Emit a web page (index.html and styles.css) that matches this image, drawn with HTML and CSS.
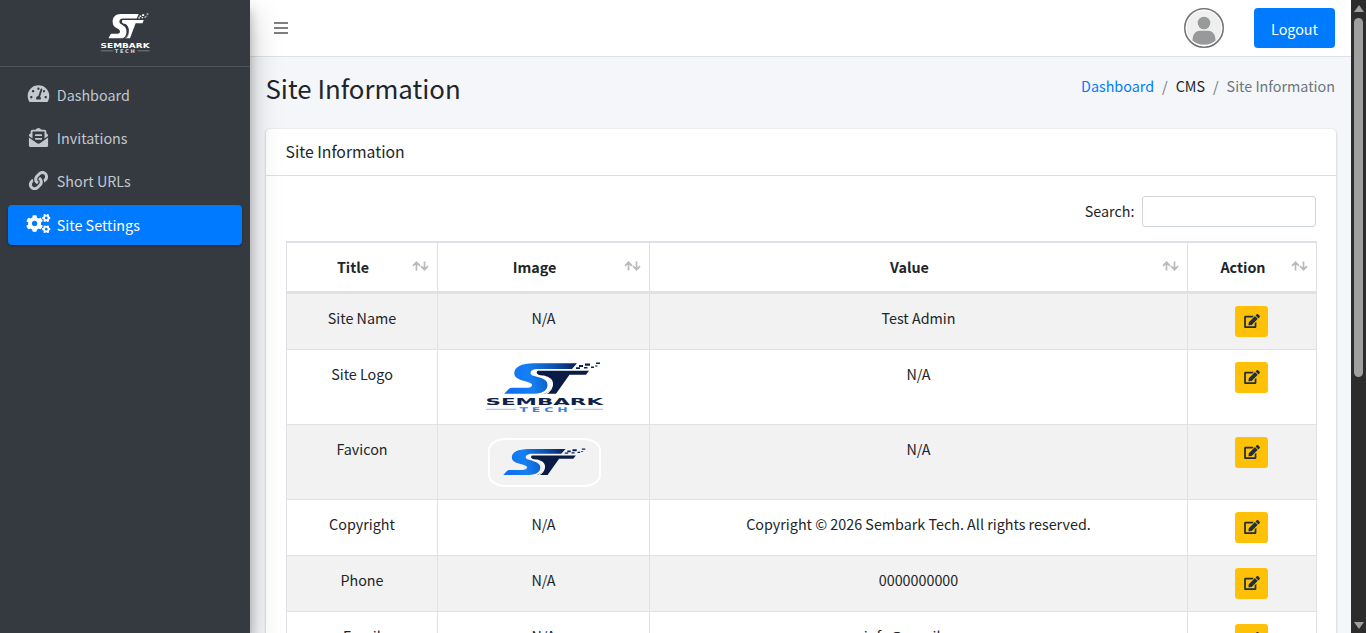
FILE: index.html
```html
<!DOCTYPE html>
<html lang="en">
<head>
    <meta charset="UTF-8">
    <meta name="viewport" content="width=device-width, initial-scale=1.0">
    <title>Site Information</title>
    <link rel="stylesheet" href="styles.css">
</head>
<body>
<svg class="sprite" aria-hidden="true">
    <defs>
        <linearGradient id="blue" gradientUnits="userSpaceOnUse" x1="25" y1="20" x2="92" y2="4">
            <stop offset="0" stop-color="#0f6ff0"/>
            <stop offset="0.3" stop-color="#1580f5"/>
            <stop offset="0.7" stop-color="#0b4fb0"/>
            <stop offset="1" stop-color="#0a1f55"/>
        </linearGradient>
    </defs>
    <symbol id="mark" viewBox="20 0 98 33" preserveAspectRatio="none">
        <path class="mark-s" d="M93 1.300H50C37 1.300 30.300 5.500 30.300 11c0 4.500 4 6.300 9.200 7.700 5 1.400 8.500 2.300 8.500 4.300 0 2-2.500 2.800-6 2.800H28c-2 0-3 .8-4 2L20.300 31.700H50c9 0 13.500-3.500 13.500-8.700 0-4-3-6-8-7.500-5-1.500-9-2-9-4.500 0-2.700 3.500-4.100 7.500-4.100H88z"/>
        <path class="mark-t" d="M54 8.700h51l-3 4H85.500L72 31.700H60c6-2.200 9-6 9-10 0-4.500-3.500-6.500-9-8.200h-4c-3-1.200-4.500-3.300-2-4.800z"/>
        <path class="mark-gap" d="M50 10c1 5.500 18 3.500 18 13 0 4-2.500 7-6.500 9"/>
        <path class="mark-s" d="M95 3h4v2h-4zM92 5.300h4v1.600h-4zM101 1.500h5v2.200h-5zM100 5h3.500v1.600H100zM107 4.500h3v1.500h-3zM112 .500h4v1.500h-4zM111 3.500h2.500v1H111z"/>
    </symbol>
    <symbol id="logo" viewBox="0 0 120 50" preserveAspectRatio="none">
        <use href="#mark" x="20" y="0" width="98" height="33"/>
        <text class="logo-name" x="1.500" y="43.200" textLength="117.500" lengthAdjust="spacingAndGlyphs">SEMBARK</text>
        <text class="logo-sub" x="35.500" y="49.600" textLength="52" lengthAdjust="spacingAndGlyphs">TECH</text>
        <path class="logo-line" d="M2 47.300h30M90 47.300h29"/>
    </symbol>
    <symbol id="i-dashboard" viewBox="0 0 576 512">
        <path d="M288 32C128.940 32 0 160.940 0 320c0 52.800 14.250 102.260 39.060 144.800 5.610 9.620 16.300 15.200 27.440 15.200h443c11.140 0 21.830-5.580 27.440-15.200C561.750 422.260 576 372.800 576 320c0-159.060-128.940-288-288-288zm0 64c14.710 0 26.580 10.130 30.320 23.650-1.110 2.260-2.640 4.230-3.450 6.670l-9.220 27.670c-5.130 3.490-10.970 6.010-17.640 6.010-17.670 0-32-14.330-32-32S270.330 96 288 96zM96 384c-17.670 0-32-14.330-32-32s14.330-32 32-32 32 14.330 32 32-14.330 32-32 32zm48-160c-17.670 0-32-14.330-32-32s14.330-32 32-32 32 14.330 32 32-14.330 32-32 32zm246.770-72.410l-61.330 184C343.130 347.330 352 364.540 352 384c0 11.720-3.380 22.550-8.880 32H232.880c-5.500-9.450-8.880-20.280-8.880-32 0-33.940 26.500-61.430 59.900-63.590l61.340-184.010c4.170-12.560 17.730-19.450 30.360-15.170 12.570 4.190 19.350 17.790 15.170 30.360zm14.660 57.200l15.520-46.550c3.470-1.290 7.130-2.230 11.050-2.230 17.670 0 32 14.330 32 32s-14.330 32-32 32c-11.380-.010-20.890-6.280-26.570-15.220zM480 384c-17.670 0-32-14.330-32-32s14.330-32 32-32 32 14.330 32 32-14.330 32-32 32z"/>
    </symbol>
    <symbol id="i-invite" viewBox="0 0 512 512">
        <path d="M176 216h160c8.840 0 16-7.160 16-16v-16c0-8.840-7.160-16-16-16H176c-8.840 0-16 7.160-16 16v16c0 8.840 7.160 16 16 16zm-16 80c0 8.840 7.160 16 16 16h160c8.840 0 16-7.160 16-16v-16c0-8.840-7.160-16-16-16H176c-8.840 0-16 7.160-16 16v16zm96 121.130c-16.420 0-32.840-5.060-46.860-15.190L0 250.860V464c0 26.510 21.490 48 48 48h416c26.510 0 48-21.490 48-48V250.860L302.860 401.940c-14.020 10.120-30.440 15.190-46.860 15.190zm237.610-254.180c-8.850-6.940-17.240-13.470-29.610-22.810V96c0-26.510-21.490-48-48-48h-77.550c-3.040-2.200-5.870-4.260-9.040-6.560C312.600 29.170 279.200-.350 256 0c-23.200-.350-56.590 29.170-73.410 41.440-3.170 2.300-6 4.360-9.040 6.560H96c-26.510 0-48 21.490-48 48v44.140c-12.370 9.330-20.760 15.870-29.610 22.810A47.995 47.995 0 0 0 0 200.720v10.650l96 69.350V96h320v184.720l96-69.350v-10.650c0-14.740-6.780-28.670-18.390-37.770z"/>
    </symbol>
    <symbol id="i-link" viewBox="0 0 512 512">
        <path d="M326.612 185.391c59.747 59.809 58.927 155.698.36 214.590-.11.12-.24.25-.36.37l-67.200 67.200c-59.270 59.270-155.699 59.262-214.960 0-59.270-59.260-59.270-155.700 0-214.960l37.106-37.106c9.840-9.840 26.786-3.300 27.294 10.606.648 17.722 3.826 35.527 9.690 52.721 1.986 5.822.567 12.262-3.783 16.612l-13.087 13.087c-28.026 28.026-28.905 73.660-1.155 101.960 28.024 28.579 74.086 28.749 102.325.51l67.200-67.190c28.191-28.191 28.073-73.757 0-101.830-3.701-3.694-7.429-6.564-10.341-8.569a16.037 16.037 0 0 1-6.947-12.606c-.396-10.567 3.348-21.456 11.698-29.806l21.054-21.055c5.521-5.521 14.182-6.199 20.584-1.731a152.482 152.482 0 0 1 20.522 17.197zM467.547 44.449c-59.261-59.262-155.690-59.270-214.960 0l-67.200 67.200c-.12.12-.25.25-.36.37-58.566 58.892-59.387 154.781.36 214.590a152.454 152.454 0 0 0 20.521 17.196c6.402 4.468 15.064 3.789 20.584-1.731l21.054-21.055c8.350-8.350 12.094-19.239 11.698-29.806a16.037 16.037 0 0 0-6.947-12.606c-2.912-2.005-6.640-4.875-10.341-8.569-28.073-28.073-28.191-73.639 0-101.830l67.200-67.190c28.239-28.239 74.300-28.069 102.325.51 27.750 28.300 26.872 73.934-1.155 101.960l-13.087 13.087c-4.350 4.350-5.769 10.790-3.783 16.612 5.864 17.194 9.042 34.999 9.690 52.721.509 13.906 17.454 20.446 27.294 10.606l37.106-37.106c59.271-59.259 59.271-155.699.001-214.959z"/>
    </symbol>
    <symbol id="small-gear" viewBox="0 0 640 512">
        <path d="M512.100 191l-8.200 14.300c-3 5.300-9.400 7.500-15.100 5.400-11.800-4.400-22.600-10.700-32.100-18.600-4.600-3.800-5.800-10.500-2.800-15.700l8.200-14.300c-6.900-8-12.300-17.300-15.900-27.400h-16.500c-6 0-11.200-4.300-12.200-10.300-2-12-2.100-24.600 0-37.100 1-6 6.200-10.400 12.200-10.400h16.500c3.600-10.100 9-19.400 15.900-27.400l-8.200-14.300c-3-5.200-1.900-11.900 2.800-15.700 9.500-7.900 20.400-14.200 32.100-18.600 5.700-2.100 12.100.1 15.100 5.400l8.200 14.300c10.500-1.900 21.200-1.900 31.700 0L552 6.300c3-5.300 9.400-7.500 15.100-5.400 11.800 4.400 22.600 10.700 32.100 18.600 4.600 3.800 5.800 10.500 2.800 15.700l-8.200 14.300c6.900 8 12.300 17.300 15.900 27.400h16.500c6 0 11.200 4.300 12.200 10.300 2 12 2.100 24.600 0 37.100-1 6-6.200 10.400-12.200 10.400h-16.500c-3.600 10.100-9 19.400-15.900 27.400l8.200 14.300c3 5.200 1.900 11.900-2.800 15.700-9.500 7.900-20.400 14.200-32.100 18.600-5.700 2.100-12.100-.1-15.100-5.400l-8.200-14.300c-10.400 1.900-21.200 1.900-31.700 0zm-10.500-58.800c38.500 29.600 82.400-14.300 52.800-52.800-38.500-29.700-82.400 14.300-52.800 52.800z"/>
    </symbol>
    <symbol id="i-cogs" viewBox="0 0 640 512">
        <path d="M386.300 286.100l33.700 16.800c10.100 5.800 14.500 18.100 10.500 29.100-8.900 24.200-26.400 46.400-42.600 65.800-7.400 8.900-20.200 11.100-30.300 5.300l-29.100-16.800c-16 13.700-34.600 24.600-54.900 31.700v33.600c0 11.600-8.300 21.600-19.700 23.600-24.600 4.200-50.400 4.400-75.900 0-11.500-2-20-11.900-20-23.600V418c-20.300-7.200-38.900-18-54.900-31.700L74 403c-10 5.800-22.900 3.600-30.300-5.300-16.200-19.400-33.300-41.600-42.200-65.700-4-10.900.4-23.200 10.500-29.100l33.300-16.800c-3.900-20.900-3.900-42.400 0-63.400L12 205.800c-10.100-5.800-14.600-18.100-10.500-29 8.900-24.200 26-46.400 42.200-65.800 7.400-8.900 20.200-11.100 30.300-5.300l29.100 16.800c16-13.700 34.600-24.600 54.900-31.700V57.100c0-11.500 8.200-21.500 19.600-23.500 24.600-4.200 50.500-4.400 76-.1 11.500 2 20 11.900 20 23.600v33.600c20.300 7.200 38.900 18 54.900 31.700l29.100-16.800c10-5.800 22.900-3.600 30.300 5.300 16.200 19.400 33.200 41.600 42.100 65.800 4 10.900.1 23.200-10 29.100l-33.700 16.800c3.900 21 3.900 42.500 0 63.500zm-117.600 21.100c59.200-77-28.700-164.900-105.700-105.700-59.200 77 28.700 164.900 105.700 105.700z"/>
        <use href="#small-gear" width="640" height="512"/>
        <use href="#small-gear" y="299" width="640" height="512"/>
    </symbol>
    <symbol id="i-edit" viewBox="0 0 576 512">
        <path d="M402.600 83.200l90.200 90.200c3.800 3.800 3.800 10 0 13.800L274.400 405.600l-92.800 10.300c-12.400 1.400-22.900-9.100-21.500-21.500l10.300-92.800L388.800 83.200c3.800-3.800 10-3.800 13.800 0zm162-22.900l-48.800-48.800c-15.200-15.200-39.900-15.200-55.200 0l-35.400 35.400c-3.800 3.800-3.800 10 0 13.800l90.200 90.200c3.800 3.800 10 3.800 13.800 0l35.400-35.400c15.200-15.300 15.200-40 0-55.200zM384 346.200V448H64V128h229.800c3.200 0 6.200-1.300 8.500-3.500l40-40c7.600-7.600 2.200-20.500-8.500-20.500H48C21.500 64 0 85.500 0 112v352c0 26.500 21.500 48 48 48h352c26.500 0 48-21.500 48-48V306.200c0-10.700-12.900-16-20.500-8.500l-40 40c-2.200 2.300-3.500 5.300-3.500 8.500z"/>
    </symbol>
    <symbol id="i-sort" viewBox="0 0 17 10">
        <path d="M4.500 9.500V1.500M1 4.800l3.500-3.500L8 4.800M12.500.5v8M9 5.200l3.500 3.500L16 5.200" fill="none" stroke="#b9babc" stroke-width="1.700"/>
    </symbol>
</svg>

<div class="wrapper">
    <aside class="sidebar">
        <a class="brand" href="#">
            <svg class="brand-logo"><use href="#logo"/></svg>
        </a>
        <nav class="menu">
            <a class="menu-link" href="#"><svg><use href="#i-dashboard"/></svg><span>Dashboard</span></a>
            <a class="menu-link" href="#"><svg><use href="#i-invite"/></svg><span>Invitations</span></a>
            <a class="menu-link" href="#"><svg><use href="#i-link"/></svg><span>Short URLs</span></a>
            <a class="menu-link active" href="#"><svg><use href="#i-cogs"/></svg><span>Site Settings</span></a>
        </nav>
    </aside>

    <div class="main">
        <header class="navbar">
            <a class="toggle" href="#"><i></i><i></i><i></i></a>
            <svg class="avatar" viewBox="0 0 40 40">
                <circle cx="20" cy="20" r="19.200" fill="#efefef" stroke="#757575" stroke-width="1.600"/>
                <circle cx="20" cy="20" r="17.800" fill="none" stroke="#fff" stroke-width="1"/>
                <circle cx="20" cy="15" r="6.300" fill="#98999b"/>
                <path d="M8.500 32.500C8.500 26 12 22.800 16 22.800h8c4 0 7.500 3.200 7.500 9.700C28 35.500 24 36.600 20 36.600s-8-1.100-11.500-4.100z" fill="#98999b"/>
            </svg>
            <button class="logout">Logout</button>
        </header>

        <div class="content-header">
            <h1>Site Information</h1>
            <ol class="breadcrumb">
                <li><a href="#">Dashboard</a></li>
                <li>CMS</li>
                <li class="current">Site Information</li>
            </ol>
        </div>

        <section class="card">
            <h3 class="card-header">Site Information</h3>
            <div class="card-body">
                <div class="filter">
                    <label for="search">Search:</label>
                    <input type="search" id="search">
                </div>
                <table>
                    <colgroup>
                        <col class="col-title">
                        <col class="col-image">
                        <col class="col-value">
                        <col class="col-action">
                    </colgroup>
                    <thead>
                    <tr>
                        <th><div>Title<svg><use href="#i-sort"/></svg></div></th>
                        <th><div>Image<svg><use href="#i-sort"/></svg></div></th>
                        <th><div>Value<svg><use href="#i-sort"/></svg></div></th>
                        <th><div>Action<svg><use href="#i-sort"/></svg></div></th>
                    </tr>
                    </thead>
                    <tbody>
                    <tr>
                        <td>Site Name</td>
                        <td>N/A</td>
                        <td>Test Admin</td>
                        <td><button class="edit"><svg><use href="#i-edit"/></svg></button></td>
                    </tr>
                    <tr>
                        <td>Site Logo</td>
                        <td><svg class="site-logo"><use href="#logo"/></svg></td>
                        <td>N/A</td>
                        <td><button class="edit"><svg><use href="#i-edit"/></svg></button></td>
                    </tr>
                    <tr>
                        <td>Favicon</td>
                        <td><div class="favicon"><svg><use href="#mark"/></svg></div></td>
                        <td>N/A</td>
                        <td><button class="edit"><svg><use href="#i-edit"/></svg></button></td>
                    </tr>
                    <tr>
                        <td>Copyright</td>
                        <td>N/A</td>
                        <td>Copyright © 2026 Sembark Tech. All rights reserved.</td>
                        <td><button class="edit"><svg><use href="#i-edit"/></svg></button></td>
                    </tr>
                    <tr>
                        <td>Phone</td>
                        <td>N/A</td>
                        <td>0000000000</td>
                        <td><button class="edit"><svg><use href="#i-edit"/></svg></button></td>
                    </tr>
                    <tr>
                        <td>Email</td>
                        <td>N/A</td>
                        <td>info@gmail.com</td>
                        <td><button class="edit"><svg><use href="#i-edit"/></svg></button></td>
                    </tr>
                    </tbody>
                </table>
            </div>
        </section>
    </div>

    <div class="scrollbar">
        <i class="up"></i>
        <i class="thumb"></i>
        <i class="down"></i>
    </div>
</div>
</body>
</html>
```
FILE: styles.css
```css
* {
    box-sizing: border-box;
}
body {
    margin: 0;
    height: 100vh;
    overflow: hidden;
    font-family: "Noto Sans CJK SC", "Noto Sans", sans-serif;
    font-size: 14.33px;
    line-height: 24px;
    color: #212529;
    background-color: #f4f6f9;
}
a {
    color: #007bff;
    text-decoration: none;
}
button {
    border: none;
    border-radius: 4px;
    font-family: inherit;
    cursor: pointer;
}
.sprite {
    display: block;
    width: 0;
    height: 0;
}
.wrapper {
    display: flex;
    height: 100vh;
    overflow: hidden;
}

/* sidebar */
.sidebar {
    position: relative;
    z-index: 2;
    flex: 0 0 250px;
    background-color: #343a40;
    box-shadow: 0 14px 28px rgba(0, 0, 0, 0.25), 0 10px 10px rgba(0, 0, 0, 0.22);
}
.brand {
    display: flex;
    justify-content: center;
    height: 67px;
    padding-top: 13px;
    border-bottom: 1px solid #4b545c;
}
.brand-logo {
    width: 50px;
    height: 40px;
    --mark-s: #fff;
    --mark-t: #fff;
    --gap: #343a40;
    --sub: #d5d7d9;
}
.menu {
    padding: 8px;
}
.menu-link {
    display: flex;
    align-items: center;
    height: 40px;
    margin-bottom: 3.2px;
    padding-left: 16.5px;
    border-radius: 4px;
    color: #c2c7d0;
}
.menu-link svg {
    width: 27px;
    height: 19.2px;
    margin: 0 5.300px 2px 0;
    fill: currentColor;
}
.menu-link.active {
    color: #fff;
    background-color: #007bff;
    box-shadow: 0 1px 3px rgba(0, 0, 0, 0.12), 0 1px 2px rgba(0, 0, 0, 0.24);
}

/* top bar */
.main {
    flex: 1;
    min-width: 0;
}
.navbar {
    display: flex;
    align-items: center;
    height: 57px;
    padding: 0 16px 0 24px;
    border-bottom: 1px solid #dee2e6;
    background-color: #fff;
}
.toggle {
    display: flex;
    flex-direction: column;
    gap: 3px;
    width: 14px;
    margin-right: auto;
}
.toggle i {
    height: 2px;
    background-color: #7f7f7f;
}
.avatar {
    width: 40px;
    height: 40px;
    margin-right: 30px;
}
.logout {
    width: 81px;
    height: 40px;
    padding: 0;
    font-size: 14.33px;
    color: #fff;
    background-color: #007bff;
}

.content-header {
    display: flex;
    justify-content: space-between;
    padding: 13px 16px 0 15.5px;
    height: 72px;
}
h1 {
    margin: 0;
    font-size: 25.8px;
    font-weight: 400;
    line-height: 35px;
}
.breadcrumb {
    display: flex;
    margin: 4px 0 0;
    padding: 0;
    list-style: none;
}
.breadcrumb li + li::before {
    content: "/";
    padding: 0 8px;
    color: #6c757d;
}
.current {
    color: #6c757d;
}

/* card with the settings table */
.card {
    margin: 0 15px 0 16px;
    border-radius: 4px;
    background-color: #fff;
    box-shadow: 0 0 1px rgba(0, 0, 0, 0.125), 0 1px 3px rgba(0, 0, 0, 0.2);
}
.card-header {
    height: 47px;
    margin: 0;
    padding: 0 19.5px;
    border-bottom: 1px solid #dfdfdf;
    font-size: 15.76px;
    font-weight: 400;
    line-height: 46px;
}
.card-body {
    padding: 20px 19px 20px 20px;
}
.filter {
    display: flex;
    justify-content: flex-end;
    align-items: center;
    margin: 0 1px 14px 0;
}
.filter label {
    margin-bottom: 2px;
}
.filter input {
    width: 174px;
    height: 31px;
    margin-left: 7.5px;
    border: 1px solid #ced4da;
    border-radius: 3px;
    background-color: #fff;
}

table {
    width: 1031px;
    table-layout: fixed;
    border: 1px solid #dee2e6;
    border-right: 0;
    border-collapse: separate;
    border-spacing: 0;
    text-align: center;
}
.col-title {
    width: 151px;
}
.col-image {
    width: 212px;
}
.col-action {
    width: 129px;
}
th {
    height: 51px;
    padding: 0 8px 0 12px;
    border: solid #dee2e6;
    border-width: 1px 1px 2px 0;
    font-weight: 700;
}
th div {
    display: grid;
    grid-template-columns: 1fr 17px;
    column-gap: 5px;
    align-items: center;
}
th svg {
    width: 17px;
    height: 10px;
    margin-bottom: 3px;
}
td {
    padding: 12px;
    border: solid #dee2e6;
    border-width: 1px 1px 0 0;
    vertical-align: top;
}
tbody tr:nth-child(odd) {
    background-color: #f2f2f2;
}
.edit {
    display: flex;
    align-items: center;
    justify-content: center;
    width: 33px;
    height: 31px;
    margin: 0 0 0 35px;
    padding: 0 0 1px;
    border-radius: 3px;
    background-color: #ffc107;
}
.edit svg {
    width: 16px;
    height: 14px;
    fill: #1f2d3d;
}

/* logo */
.site-logo {
    display: block;
    width: 120px;
    height: 50px;
    margin: 0 auto;
}
.mark-s {
    fill: var(--mark-s, url(#blue));
}
.mark-t {
    fill: var(--mark-t, #0a1c45);
}
.mark-gap {
    fill: none;
    stroke: var(--gap, #fff);
    stroke-width: 1.2;
}
.logo-name {
    font-family: "DejaVu Sans", sans-serif;
    font-size: 8.5px;
    font-weight: 700;
    fill: var(--mark-t, #0f2148);
}
.logo-sub {
    font-family: "DejaVu Sans", sans-serif;
    font-size: 6.4px;
    font-weight: 700;
    letter-spacing: 2px;
    fill: var(--sub, #3f83d6);
}
.logo-line {
    stroke: var(--sub, #6fa0dc);
    stroke-width: 0.7;
}
.favicon {
    display: flex;
    width: 113px;
    height: 49px;
    margin: 1px 0 0 38px;
    padding: 8px 0 0 13px;
    border: 2px solid #fff;
    border-radius: 18px / 12px;
}
.favicon svg {
    width: 84px;
    height: 28px;
}

/* page scrollbar */
.scrollbar {
    display: flex;
    flex-direction: column;
    align-items: center;
    flex: 0 0 15px;
    padding: 5px 0 4px;
    background-color: #2c2c2c;
}
.up, .down {
    border: solid transparent;
    border-width: 0 5px;
}
.up {
    border-bottom: 7px solid #9f9f9f;
}
.thumb {
    width: 9px;
    height: 359px;
    margin-top: 6px;
    border-radius: 5px;
    background-color: #9f9f9f;
}
.down {
    margin-top: auto;
    border-top: 7px solid #9f9f9f;
}
```
